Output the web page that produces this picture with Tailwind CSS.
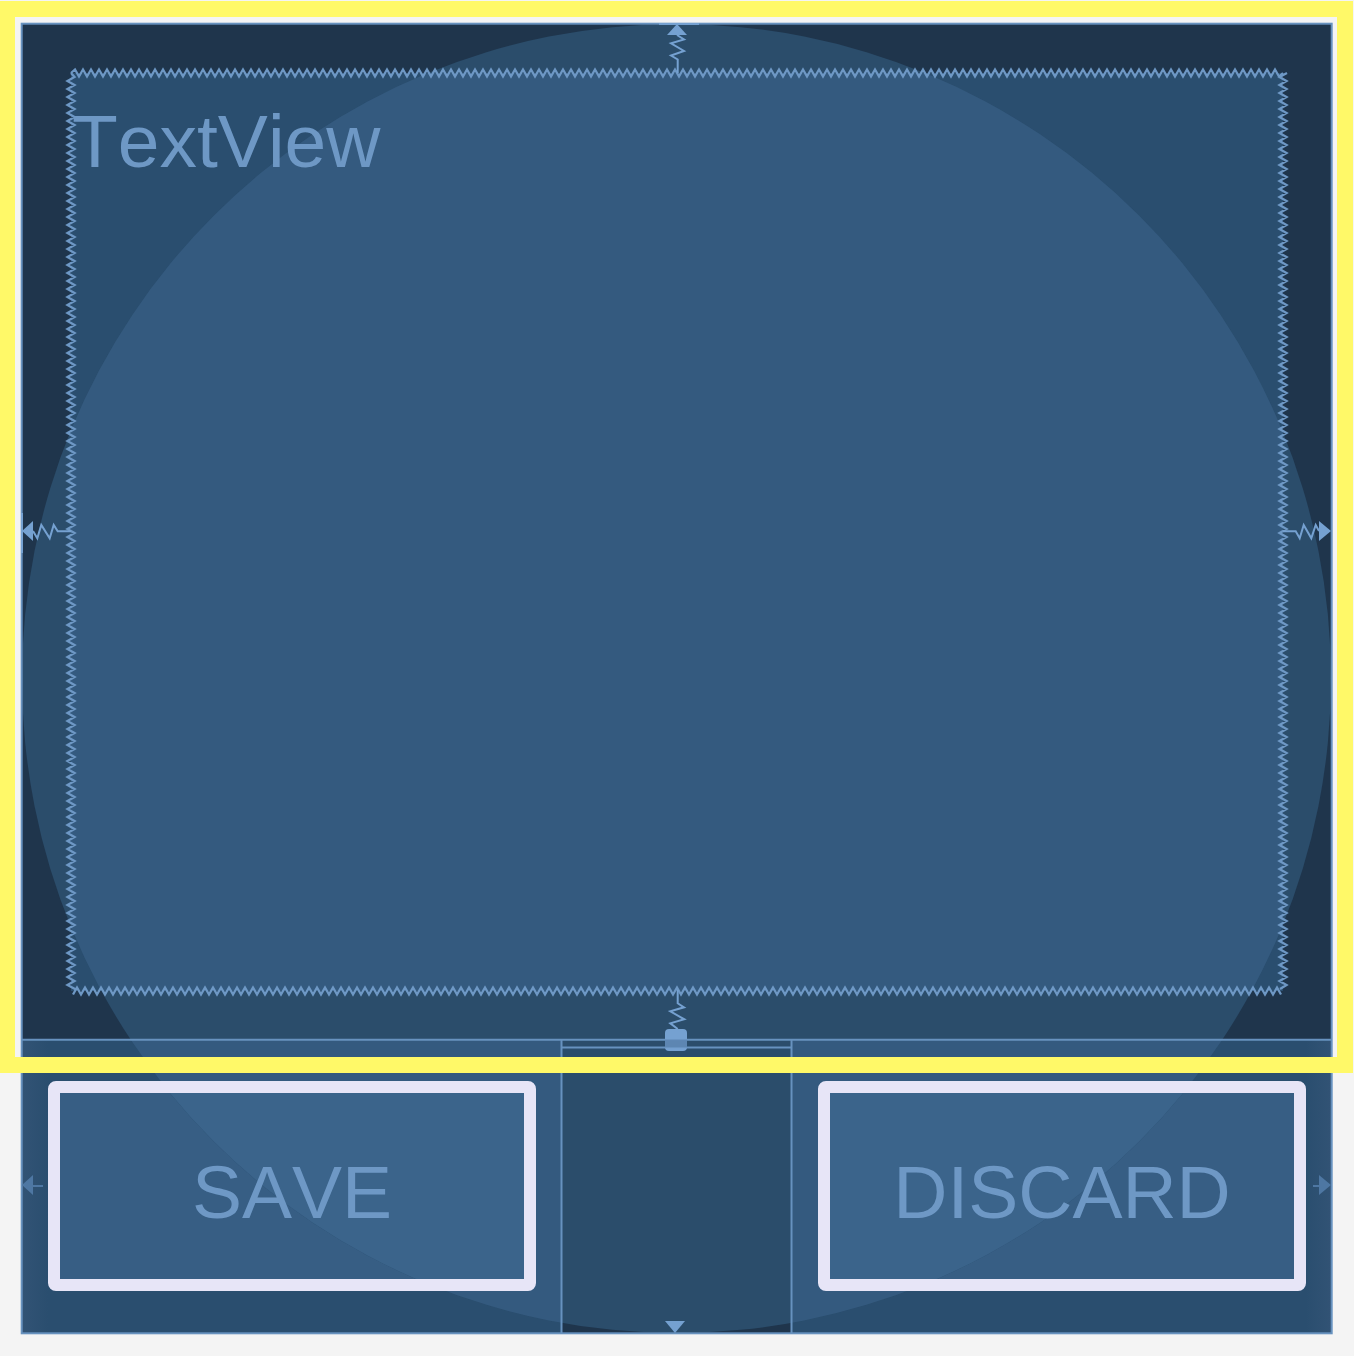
<!DOCTYPE html>
<html lang="en">
<head>
<meta charset="utf-8">
<meta name="viewport" content="width=device-width, initial-scale=1">
<title>Layout blueprint</title>
<script src="https://cdn.jsdelivr.net/npm/@tailwindcss/browser@4"></script>
</head>
<body class="bg-[#f4f4f4] font-['Liberation_Sans',Arial,sans-serif] text-[#6e98c5] [font-kerning:none]">
<main class="relative aspect-[1354/1356] w-full overflow-hidden">
  <!-- Blueprint surface: round screen, view bounds and constraints -->
  <svg class="absolute inset-0 h-full w-full" viewBox="0 0 1354 1356" aria-hidden="true">
    <defs>
      <clipPath id="round"><circle cx="676.5" cy="678.5" r="654.5"/></clipPath>
      <linearGradient id="fadeLeft"><stop offset="0" stop-color="#325375"/><stop offset="1" stop-color="#325375" stop-opacity="0"/></linearGradient>
      <linearGradient id="fadeRight"><stop offset="0" stop-color="#325375" stop-opacity="0"/><stop offset="1" stop-color="#325375"/></linearGradient>
    </defs>
    <rect x="22" y="24" width="1310" height="1309" fill="#1f354c"/>
    <g fill="#2a4e6f">
      <rect x="71" y="73" width="1212" height="918"/>
      <rect x="22" y="1040" width="539" height="293"/>
      <rect x="792" y="1040" width="540" height="293"/>
    </g>
    <rect x="22" y="1040" width="26" height="293" fill="url(#fadeLeft)"/>
    <rect x="1306" y="1040" width="26" height="293" fill="url(#fadeRight)"/>
    <g fill="#375e84">
      <rect x="54" y="1088" width="476" height="198"/>
      <rect x="824" y="1088" width="476" height="198"/>
    </g>
    <g clip-path="url(#round)">
      <rect x="22" y="24" width="1310" height="1309" fill="#2b4d6b"/>
      <g fill="#345a7f">
        <rect x="71" y="73" width="1212" height="918"/>
        <rect x="22" y="1040" width="539" height="293"/>
        <rect x="792" y="1040" width="540" height="293"/>
      </g>
      <g fill="#3b648b">
        <rect x="54" y="1088" width="476" height="198"/>
        <rect x="824" y="1088" width="476" height="198"/>
      </g>
    </g>
    <g fill="none" stroke="#6792bf" stroke-width="2">
      <rect x="21.7" y="23.7" width="1310" height="1309.6"/>
      <path d="M22 1039.7H1332M561.5 1040V1333M791.5 1040V1333M561.5 1047.6H791.5"/>
    </g>
    <path id="zigzag" fill="none" stroke="#6e98c5" stroke-width="2.3"/>
    <g fill="none" stroke="#75a1d1" stroke-width="2">
      <path d="M659 24H699M22 513V553"/>
      <path d="M677 35L684 39.5L671 43.3L684 51L671 55.5L677.7 59.5V73"/>
      <path d="M33 531L37.3 538.3L41.3 525L49.7 538.3L53.7 525L57.7 531.3H71"/>
      <path d="M1283 531.3H1295.7L1299.7 538.3L1303.7 525L1311.3 538.3L1315.7 525L1319 531"/>
      <path d="M677.7 990V1003.3L684 1007.3L670.3 1011.3L684.3 1019.3L670.3 1023.3L677.7 1029"/>
    </g>
    <g fill="#75a1d1">
      <path d="M677 24L687 35H667Z"/>
      <path d="M22 531L33 521V541Z"/>
      <path d="M1331 531L1319 521V541Z"/>
      <path d="M665 1321H685L675 1333Z"/>
      <rect x="665" y="1029" width="22" height="22" rx="4"/>
    </g>
    <path d="M665 1040H687V1047H665Z" fill="#5d86b2"/>
    <path d="M665 1039.7H687M665 1047.6H687" stroke="#6792bf" stroke-width="1"/>
    <g fill="#4e77a3" stroke="none">
      <path d="M22 1185L33 1175V1195Z"/>
      <path d="M1331 1185L1319 1175V1195Z"/>
      <path d="M33 1185H43V1187H33ZM1313 1185H1319V1187H1313Z"/>
    </g>
    <rect x="7" y="9" width="1338" height="1056" fill="none" stroke="#fff968" stroke-width="16"/>
  </svg>

  <div class="relative flex h-full flex-col px-[22px] pb-[23px]">
    <p class="grow px-[50px] pt-[97px] text-[75px] leading-[88px]">TextView</p>
    <div class="grid h-[294px] grid-cols-[54fr_23fr_54fr]">
      <div class="flex px-[26px] py-[42px]">
        <button type="button" class="grow rounded-lg border-12 border-[#e7e5f7] pt-3 text-[75px] leading-[88px]">SAVE</button>
      </div>
      <div></div>
      <div class="flex px-[26px] py-[42px]">
        <button type="button" class="grow rounded-lg border-12 border-[#e7e5f7] pt-3 text-[75px] leading-[88px]">DISCARD</button>
      </div>
    </div>
  </div>
</main>
<script>
  // Builds the spring-shaped outline of the text view, one tooth every 4px.
  const points = (count, at) => Array.from({ length: count }, (_, i) => at(i).join(' ')).join('L');
  document.getElementById('zigzag').setAttribute('d', [
    'M71 73L' + points(302, i => [75 + 4 * i, i % 2 ? 76.5 : 69.5]) + 'L1283 73',
    'M' + points(303, i => [73 + 4 * i, i % 2 ? 987.5 : 994.5]),
    'M71 73L' + points(228, i => [i % 2 ? 67.5 : 74.5, 77 + 4 * i]) + 'L75 989',
    'M1287 73L' + points(228, i => [i % 2 ? 1286.5 : 1279.5, 77 + 4 * i]) + 'L1280 989'
  ].join(''));
</script>
</body>
</html>
